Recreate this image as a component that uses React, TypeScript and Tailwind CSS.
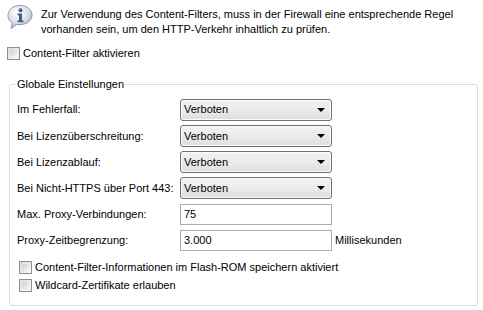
import React from "react";

const Check = () => (
  <span className="inline-block w-[13px] h-[13px] border border-[#8e8f8f] bg-gradient-to-br from-[#dcdcdc] to-[#fafafa] p-[2px] shrink-0">
    <span className="block w-full h-full bg-gradient-to-br from-[#cbcfd5] to-[#f6f6f6]" />
  </span>
);

const Select = () => (
  <div className="w-[152px] h-[22px] border border-[#707070] rounded-[3px] bg-gradient-to-b from-[#f2f2f2] via-[#ebebeb] to-[#dddddd] flex items-center justify-between pl-[3px] pr-[6px] shadow-[inset_0_0_0_1px_#fcfcfc]">
    <span>Verboten</span>
    <svg width="8" height="4" viewBox="0 0 8 4"><path d="M0 0H8L4 4Z" fill="#000" /></svg>
  </div>
);

const Input = ({ v }: { v: string }) => (
  <div className="w-[152px] h-[21px] border border-[#abadb3] bg-white flex items-center pl-[3px]">
    {v}
  </div>
);

const Row = ({ label, children }: { label: string; children: React.ReactNode }) => (
  <div className="flex items-center h-[26.2px]">
    <span className="w-[163px] shrink-0">{label}</span>
    {children}
  </div>
);

export default function App() {
  return (
    <div className="w-[483px] h-[310px] bg-white text-[11px] text-black relative overflow-hidden" style={{ fontFamily: "Tahoma, 'Liberation Sans', Arial, sans-serif" }}>
      <div className="flex pt-[4px] pl-[6px]">
        <svg width="28" height="26" viewBox="0 0 28 26" className="shrink-0">
          <defs>
            <radialGradient id="g" cx="40%" cy="30%" r="70%">
              <stop offset="0" stopColor="#ffffff" />
              <stop offset="0.6" stopColor="#dde3ea" />
              <stop offset="1" stopColor="#a9b4c0" />
            </radialGradient>
          </defs>
          <path d="M14 1.5C7 1.5 2 5.8 2 11.5c0 3.3 1.7 6 4.4 7.8L5 24.5l6-4.2c1 .2 2 .3 3 .3 7 0 12-4.3 12-9.5S21 1.5 14 1.5Z" fill="url(#g)" stroke="#8c99a6" strokeWidth="1" />
          <circle cx="14.5" cy="6.3" r="2" fill="#3b5f88" />
          <path d="M11.5 9.5h4.5v7h1.5v1.8h-6v-1.8h1.5v-5.2h-1.5Z" fill="#3b5f88" />
        </svg>
        <div className="pl-[7px] pt-[3px] leading-[15px]">
          <div>Zur Verwendung des Content-Filters, muss in der Firewall eine entsprechende Regel</div>
          <div>vorhanden sein, um den HTTP-Verkehr inhaltlich zu prüfen.</div>
        </div>
      </div>
      <div className="flex items-center gap-[3px] pl-[7px] mt-[8px]">
        <Check />
        <span>Content-Filter aktivieren</span>
      </div>
      <fieldset className="mx-[9px] mt-[16px] w-[469px] h-[228px] border border-[#d5dfe5] rounded-[3px] pl-[7px] pr-0 pt-[6px]">
        <legend className="px-[1px] ml-[-1px] leading-[13px]">Globale Einstellungen</legend>
        <Row label="Im Fehlerfall:"><Select /></Row>
        <Row label="Bei Lizenzüberschreitung:"><Select /></Row>
        <Row label="Bei Lizenzablauf:"><Select /></Row>
        <Row label="Bei Nicht-HTTPS über Port 443:"><Select /></Row>
        <Row label="Max. Proxy-Verbindungen:"><Input v="75" /></Row>
        <Row label="Proxy-Zeitbegrenzung:">
          <Input v="3.000" />
          <span className="ml-[3px]">Millisekunden</span>
        </Row>
        <div className="flex items-center gap-[3px] mt-[5px] ml-[2px] h-[18px]">
          <Check />
          <span>Content-Filter-Informationen im Flash-ROM speichern aktiviert</span>
        </div>
        <div className="flex items-center gap-[3px] ml-[2px] h-[18px]">
          <Check />
          <span>Wildcard-Zertifikate erlauben</span>
        </div>
      </fieldset>
    </div>
  );
}
